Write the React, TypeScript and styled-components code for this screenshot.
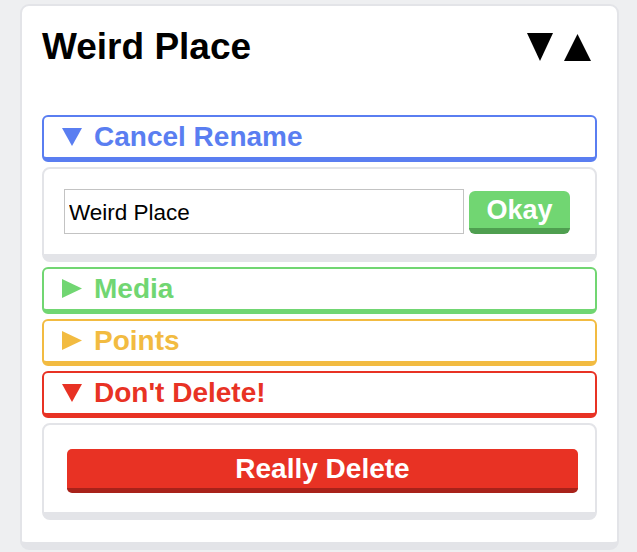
import React, { FC, ReactNode } from 'react';
import styled, { createGlobalStyle } from 'styled-components';

type Tone = 'blue' | 'green' | 'yellow' | 'red';

const tones: Record<Tone, string> = {
  blue: '#5a7ef1',
  green: '#71d672',
  yellow: '#f2bb41',
  red: '#e83224',
};

const GlobalStyle = createGlobalStyle`
  html, body {
    margin: 0;
    padding: 0;
    background: #eeeff1;
  }
  body {
    font-family: "Liberation Sans", Arial, sans-serif;
  }
`;

const DownArrow: FC<{ w: number; h: number }> = ({ w, h }) => (
  <svg width={w} height={h} viewBox={`0 0 ${w} ${h}`} aria-hidden>
    <polygon points={`0,0 ${w},0 ${w / 2},${h}`} fill="currentColor" />
  </svg>
);

const UpArrow: FC<{ w: number; h: number }> = ({ w, h }) => (
  <svg width={w} height={h} viewBox={`0 0 ${w} ${h}`} aria-hidden>
    <polygon points={`0,${h} ${w},${h} ${w / 2},0`} fill="currentColor" />
  </svg>
);

const RightArrow: FC<{ w: number; h: number }> = ({ w, h }) => (
  <svg width={w} height={h} viewBox={`0 0 ${w} ${h}`} aria-hidden>
    <polygon points={`0,0 ${w},${h / 2} 0,${h}`} fill="currentColor" />
  </svg>
);

interface ISectionProps {
  tone: Tone;
  label: string;
  open: boolean;
  children?: ReactNode;
}

const Section: FC<ISectionProps> = ({ tone, label, open, children }) => (
  <>
    <Toggle $tone={tone} type="button">
      <ArrowSlot>{open ? <DownArrow w={20} h={18} /> : <RightArrow w={20} h={19} />}</ArrowSlot>
      <span>{label}</span>
    </Toggle>
    {open && children}
  </>
);

export default function App() {
  return (
    <>
      <GlobalStyle />
      <Card>
        <TitleRow>
          <Title>Weird Place</Title>
          <SortButtons>
            <SortButton type="button" title="Move down">
              <DownArrow w={26} h={28} />
            </SortButton>
            <SortButton type="button" title="Move up">
              <UpArrow w={27} h={27} />
            </SortButton>
          </SortButtons>
        </TitleRow>
        <Sections>
          <Section tone="blue" label="Cancel Rename" open>
            <RenamePanel>
              <NameInput type="text" defaultValue="Weird Place" />
              <OkayButton type="button">Okay</OkayButton>
            </RenamePanel>
          </Section>
          <Section tone="green" label="Media" open={false} />
          <Section tone="yellow" label="Points" open={false} />
          <Section tone="red" label="Don't Delete!" open>
            <DeletePanel>
              <DeleteButton type="button">Really Delete</DeleteButton>
            </DeletePanel>
          </Section>
        </Sections>
      </Card>
    </>
  );
}

const Card = styled.section`
  box-sizing: border-box;
  width: 599px;
  margin: 4px 0 0 20px;
  padding: 20px 20px 22px;
  background: #ffffff;
  border: 2px solid #e3e4e8;
  border-bottom-width: 8px;
  border-radius: 9px;
`;

const TitleRow = styled.div`
  display: flex;
  align-items: flex-start;
  justify-content: space-between;
  margin-bottom: 46px;
`;

const Title = styled.h1`
  margin: 0;
  font-size: 37px;
  font-weight: 700;
  line-height: 42.5px;
  color: #000000;
`;

const SortButtons = styled.div`
  display: flex;
  align-items: flex-end;
  gap: 11px;
  margin: 7px 6px 0 0;
`;

const SortButton = styled.button`
  display: flex;
  padding: 0;
  border: 0;
  background: none;
  color: #000000;
  cursor: pointer;
`;

const Sections = styled.div`
  display: flex;
  flex-direction: column;
  gap: 5px;
`;

const Toggle = styled.button<{ $tone: Tone }>`
  box-sizing: border-box;
  display: flex;
  align-items: center;
  width: 100%;
  height: 47px;
  padding: 0 0 0 18px;
  background: #ffffff;
  border: 2px solid ${({ $tone }) => tones[$tone]};
  border-bottom-width: 5px;
  border-radius: 6px;
  color: ${({ $tone }) => tones[$tone]};
  font-family: inherit;
  font-size: 28px;
  font-weight: 700;
  line-height: 40px;
  text-align: left;
  cursor: pointer;
`;

const ArrowSlot = styled.span`
  display: flex;
  width: 20px;
  margin-right: 12px;
`;

const Panel = styled.div`
  box-sizing: border-box;
  background: #ffffff;
  border: 2px solid #e3e4e8;
  border-bottom-width: 8px;
  border-radius: 8px;
`;

const RenamePanel = styled(Panel)`
  display: flex;
  align-items: flex-end;
  gap: 5px;
  padding: 20px 24px 20px 20px;
`;

const NameInput = styled.input`
  box-sizing: border-box;
  width: 400px;
  height: 45px;
  padding: 4px 4px 0;
  border: 1px solid #c3c3c3;
  border-radius: 0;
  font-family: inherit;
  font-size: 22.5px;
  color: #000000;
  outline: none;
`;

const OkayButton = styled.button`
  box-sizing: border-box;
  width: 101px;
  height: 43px;
  padding: 2px 0 0;
  background: #71d672;
  border: 0;
  border-bottom: 6px solid #4f9f50;
  border-radius: 6px;
  color: #ffffff;
  font-family: inherit;
  font-size: 27px;
  font-weight: 700;
  line-height: 35px;
  cursor: pointer;
`;

const DeletePanel = styled(Panel)`
  padding: 24px 17px 19px 23px;
`;

const DeleteButton = styled.button`
  box-sizing: border-box;
  display: block;
  width: 100%;
  height: 44px;
  padding: 0;
  background: #e83224;
  border: 0;
  border-bottom: 5px solid #a8221a;
  border-radius: 5px;
  color: #ffffff;
  font-family: inherit;
  font-size: 28px;
  font-weight: 700;
  line-height: 39px;
  cursor: pointer;
`;
